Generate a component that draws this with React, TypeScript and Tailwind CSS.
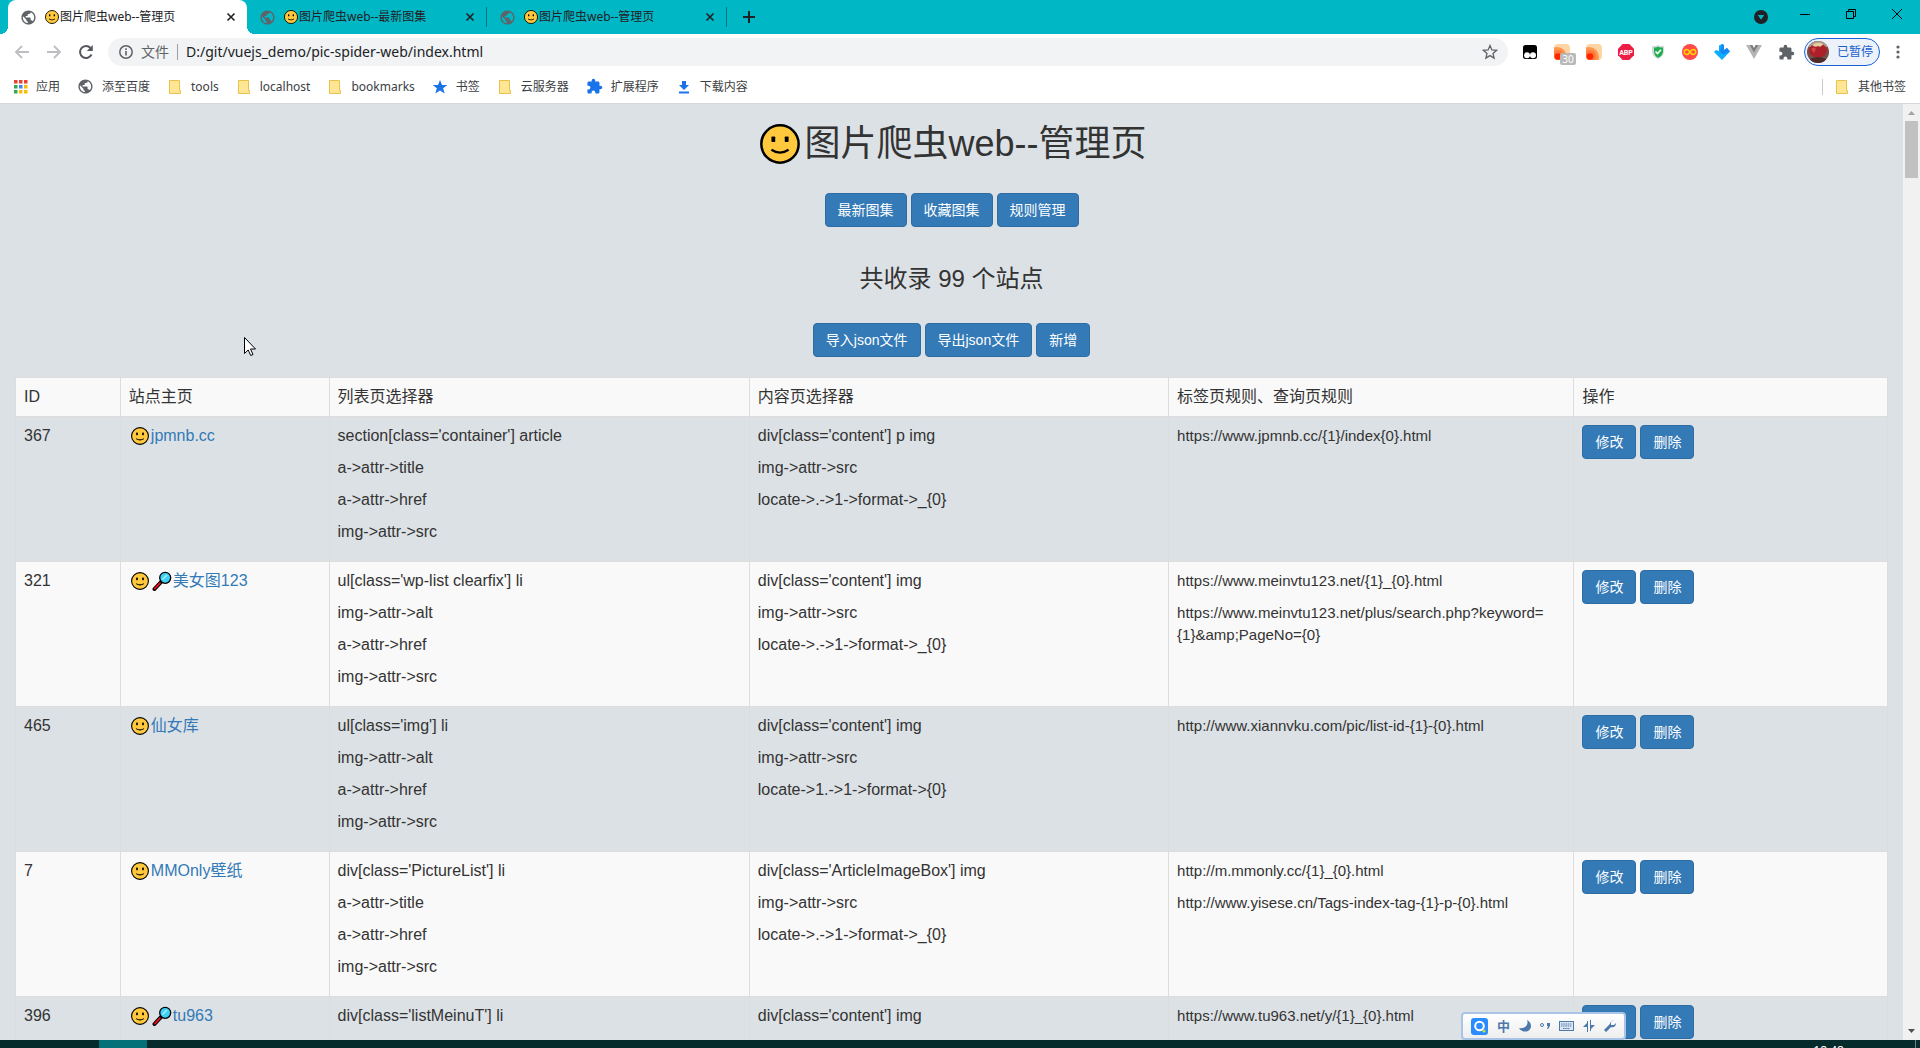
import React from "react";
import { MdPublic } from "react-icons/md";

const UI = "font-['Noto_Sans','Noto_Sans_CJK_SC',sans-serif]";

function Smile({ className }: { className: string }) {
  return (
    <svg viewBox="0 0 42 42" className={className} aria-hidden="true">
      <circle cx="21" cy="21" r="19.6" fill="#ffc83d" stroke="#000" strokeWidth="2.6" />
      <rect x="12" y="13" width="4" height="6" rx="1" fill="#000" />
      <rect x="26" y="13" width="4" height="6" rx="1" fill="#000" />
      <path d="M12 27q9 6 18 0" fill="none" stroke="#000" strokeWidth="2.4" />
    </svg>
  );
}

function Magnifier() {
  return (
    <svg viewBox="0 0 20 20" className="mx-px size-5 shrink-0" aria-hidden="true">
      <path d="M2.500 18 10 10" stroke="#000" strokeWidth="4" strokeLinecap="round" />
      <path d="M2.800 17.700 8 12.200" stroke="#e81224" strokeWidth="1.800" strokeLinecap="round" />
      <circle cx="13.200" cy="6.800" r="5.500" fill="#3fd0f5" stroke="#000" strokeWidth="1.300" />
      <path d="m10.500 8.500 4.500-4.500" stroke="#a5ecff" strokeWidth="1.600" />
    </svg>
  );
}

function Globe() {
  return <MdPublic className="size-[17px] shrink-0 text-[#5f6368]" aria-hidden="true" />;
}

function Folder() {
  return (
    <svg viewBox="0 0 16 16" className="size-4 shrink-0" aria-hidden="true">
      <path d="M2.500 1.500h10v10h1v3h-11z" fill="#ffe694" stroke="#e8c34a" />
    </svg>
  );
}

function Puzzle({ color }: { color: string }) {
  return (
    <svg viewBox="0 0 24 24" className="size-[17px] shrink-0" aria-hidden="true">
      <path fill={color} d="M20.500 11H19V7c0-1.100-.9-2-2-2h-4V3.500a2.500 2.500 0 0 0-5 0V5H4c-1.100 0-2 .9-2 2v3.800h1.500a2.700 2.700 0 0 1 0 5.400H2V20c0 1.100.9 2 2 2h3.800v-1.500a2.700 2.700 0 0 1 5.400 0V22H17c1.100 0 2-.9 2-2v-4h1.500a2.500 2.500 0 0 0 0-5z" />
    </svg>
  );
}

function Tab({ title, active }: { title: string; active?: boolean }) {
  return (
    <div className={"relative flex h-full w-[239px] shrink-0 items-center pr-2 pl-3 " + (active ? "rounded-t-lg bg-white" : "")}>
      {active && (
        <>
          <span className="absolute -left-2 bottom-0 size-2 bg-[radial-gradient(circle_at_0_0,transparent_8px,#fff_8px)]" />
          <span className="absolute -right-2 bottom-0 size-2 bg-[radial-gradient(circle_at_100%_0,transparent_8px,#fff_8px)]" />
        </>
      )}
      <Globe />
      <Smile className="ml-2 mr-px size-[14px] shrink-0" />
      <span className="grow whitespace-nowrap text-xs text-[#202124]">{title}</span>
      <button aria-label="关闭标签页" className="grid size-4 place-items-center">
        <svg viewBox="0 0 10 10" className="size-[10px]"><path d="m1.500 1.500 7 7m0-7-7 7" stroke="#202124" strokeWidth="1.600" /></svg>
      </button>
    </div>
  );
}

function TabStrip() {
  return (
    <header className="flex h-[34px] shrink-0 items-stretch bg-[#00b7c6] pl-2">
      <Tab title="图片爬虫web--管理页" active />
      <Tab title="图片爬虫web--最新图集" />
      <span className="my-[7px] w-px shrink-0 bg-[#05727c]" />
      <Tab title="图片爬虫web--管理页" />
      <span className="my-[7px] w-px shrink-0 bg-[#05727c]" />
      <button aria-label="新标签页" className="ml-2 grid w-7 place-items-center">
        <svg viewBox="0 0 14 14" className="size-[14px]"><path d="M7 1v12M1 7h12" stroke="#202124" strokeWidth="2" /></svg>
      </button>
      <div className="ml-auto flex h-7 items-center">
        <button aria-label="搜索标签页" className="mt-[6px] mr-[14px]">
          <svg viewBox="0 0 14 14" className="size-[14px]"><circle cx="7" cy="7" r="7" fill="#202124" /><path d="M3.800 5h6.400L7 9.800z" fill="#00b7c6" /></svg>
        </button>
        <button aria-label="最小化" className="grid w-[46px] place-items-center"><svg viewBox="0 0 10 10" className="size-[10px]"><path d="M0 5.500h10" stroke="#000" /></svg></button>
        <button aria-label="还原" className="grid w-[46px] place-items-center"><svg viewBox="0 0 10 10" className="size-[10px]"><path d="M.5 2.500h7v7h-7zM2.500 2.500v-2h7v7h-2" fill="none" stroke="#000" /></svg></button>
        <button aria-label="关闭" className="grid w-[46px] place-items-center"><svg viewBox="0 0 10 10" className="size-[10px]"><path d="m0 0 10 10M10 0 0 10" stroke="#000" /></svg></button>
      </div>
    </header>
  );
}

function Rss() {
  return (
    <svg viewBox="0 0 16 16" className="size-4" aria-hidden="true">
      <defs><clipPath id="rss"><rect width="16" height="16" rx="4" /></clipPath></defs>
      <g clipPath="url(#rss)">
        <rect width="16" height="16" fill="#ffd5a6" />
        <circle cx="3" cy="13" r="10" fill="#ff9650" />
        <circle cx="4" cy="12" r="6" fill="#ff7a3a" />
        <circle cx="4" cy="12.500" r="3.300" fill="#ff2600" />
      </g>
    </svg>
  );
}

function Extensions() {
  return (
    <div className="flex items-center gap-4">
      <svg viewBox="0 0 16 16" className="size-4"><rect x="1" y="1" width="14" height="14" rx="2.500" /><circle cx="5" cy="11.300" r="3" fill="#fff" /><circle cx="11" cy="11.300" r="3" fill="#fff" /></svg>
      <span className="relative">
        <Rss />
        <span className="absolute top-[9px] left-[6px] grid h-3 w-4 place-items-center rounded-[2px] bg-[#b9b9b9] text-[10px] leading-3 text-white">30</span>
      </span>
      <Rss />
      <svg viewBox="0 0 16 16" className="size-4"><path d="M4.700 0h6.600L16 4.700v6.600L11.300 16H4.700L0 11.300V4.700z" fill="#ed1e45" /><text x="8" y="10.700" fontSize="7" fontWeight="bold" fill="#fff" textAnchor="middle" fontFamily="Roboto">ABP</text></svg>
      <svg viewBox="0 0 16 16" className="size-4"><path d="M2 2c3 .3 4.500-.2 6-1 1.500.8 3 1.300 6 1v5c0 4-2.500 6.500-6 8-3.500-1.500-6-4-6-8z" fill="#d5d9dc" /><path d="M4 3.500c2 0 3-.4 4-1 1 .6 2 1 5 1V7c0 3.500-2 5.500-5 6.800C5.500 12.500 4 10.500 4 7z" fill="#1eae4f" /><path d="m5.500 7.500 2 2L11 5.800" stroke="#fff" strokeWidth="1.600" fill="none" /></svg>
      <svg viewBox="0 0 16 16" className="size-4"><circle cx="8" cy="8" r="8" fill="#ff4a4a" /><path d="M8 8C6.500 5.500 5.500 5.500 4.800 5.500a2.500 2.500 0 0 0 0 5C5.500 10.500 6.500 10.500 8 8s2.500-2.500 3.200-2.500a2.500 2.500 0 0 1 0 5C10.500 10.500 9.500 10.500 8 8z" fill="none" stroke="#ffd400" strokeWidth="1.500" /></svg>
      <svg viewBox="0 0 16 16" className="size-4"><path d="M5 1.500 8 0l2 1v5l3-2 3 3.500L8 16 0 8l2-2 3 1z" fill="#0aaeff" /><path d="M8 0l2 1v5l3-2 3 3.500-7 3L6 8z" fill="#1787f5" /></svg>
      <svg viewBox="0 0 16 16" className="size-4"><path d="M0 1h3.500L8 9l4.500-8H16L8 15z" fill="#b5b5b5" /><path d="M3.500 1h3L8 4l1.500-3h3L8 9z" fill="#7f7f7f" /></svg>
      <Puzzle color="#5f6368" />
    </div>
  );
}

function Toolbar() {
  return (
    <div className="flex h-9 shrink-0 items-center bg-white pr-[14px] pl-3">
      <div className="flex items-center gap-4 pl-[2px]">
        <button aria-label="后退"><svg viewBox="0 0 16 16" className="size-4"><path d="M15 8H2m6-6L2 8l6 6" fill="none" stroke="#bcbec1" strokeWidth="1.800" /></svg></button>
        <button aria-label="前进"><svg viewBox="0 0 16 16" className="size-4"><path d="M1 8h13M8 2l6 6-6 6" fill="none" stroke="#bcbec1" strokeWidth="1.800" /></svg></button>
        <button aria-label="重新加载"><svg viewBox="0 0 16 16" className="size-4"><path d="M13.500 10.500A6 6 0 1 1 12.500 4" fill="none" stroke="#54575c" strokeWidth="2" /><path d="M14.800 1v6h-6z" fill="#54575c" /></svg></button>
      </div>
      <div className="ml-[14px] flex h-7 grow items-center rounded-full bg-[#f1f3f4] pr-[10px] pl-[11px]">
        <svg viewBox="0 0 14 14" className="size-[14px]"><circle cx="7" cy="7" r="6.200" fill="none" stroke="#5f6368" strokeWidth="1.500" /><path d="M7 6v4.500M7 3.300v1.600" stroke="#5f6368" strokeWidth="1.600" /></svg>
        <span className="ml-2 text-sm text-[#5f6368]">文件</span>
        <span className="mx-2 h-4 w-px bg-[#9aa0a6]" />
        <input aria-label="地址" defaultValue="D:/git/vuejs_demo/pic-spider-web/index.html" className="grow bg-transparent text-sm text-[#202124] outline-none" />
        <button aria-label="添加书签"><svg viewBox="0 0 16 16" className="size-4"><path d="m8 1.500 1.900 4.400 4.700.4-3.600 3.100 1.100 4.700L8 11.600l-4.100 2.500L5 9.400 1.400 6.300l4.700-.4z" fill="none" stroke="#5f6368" strokeWidth="1.300" /></svg></button>
      </div>
      <div className="pl-[14px]"><Extensions /></div>
      <button className="ml-[9px] flex h-7 w-[76px] items-center rounded-full border border-[#1a61d8] bg-[#edf1fa] pl-[2px] text-xs text-[#1a5fd0]">
        <svg viewBox="0 0 22 22" className="mr-2 size-[22px]"><defs><clipPath id="avatar"><circle cx="11" cy="11" r="11" /></clipPath></defs><g clipPath="url(#avatar)"><rect width="22" height="22" fill="#72504b" /><path d="M0 0h22v6H0z" fill="#a99b8d" /><ellipse cx="11" cy="9.500" rx="9" ry="7" fill="#ad2029" /><path d="M5 4q6-4 11-1-2 4-5 2-3 2-6-1z" fill="#e6cda0" /><path d="M4 8q3-3 5 0l-2 4z" fill="#cc4545" /><path d="M3 18q8-4 16 0v4H3z" fill="#4e2a2a" /></g></svg>
        已暂停
      </button>
      <button aria-label="菜单" className="ml-[10px] grid w-4 place-items-center"><svg viewBox="0 0 4 14" className="h-[14px] w-1"><circle cx="2" cy="2" r="1.600" fill="#5f6368" /><circle cx="2" cy="7" r="1.600" fill="#5f6368" /><circle cx="2" cy="12" r="1.600" fill="#5f6368" /></svg></button>
    </div>
  );
}

const appColors = ["#ea4335", "#ea4335", "#ea4335", "#34a853", "#4285f4", "#fbbc04", "#34a853", "#fbbc04", "#fbbc04"];

function Bookmarks() {
  const item = "flex items-center gap-2 whitespace-nowrap";
  return (
    <nav className="flex h-[34px] shrink-0 items-center border-b border-[#d5d8dc] bg-white pr-[14px] pl-[14px] text-xs text-[#3c4043]">
      <div className="flex items-center gap-[17px]">
        <a href="#apps" className={item}>
          <svg viewBox="0 0 14 14" className="size-[14px]">
            {appColors.map((c, i) => <rect key={i} x={(i % 3) * 5} y={Math.floor(i / 3) * 5} width="3.500" height="3.500" fill={c} />)}
          </svg>应用</a>
        <a href="#baidu" className={item}><Globe />添至百度</a>
        <a href="#tools" className={item}><Folder />tools</a>
        <a href="#localhost" className={item}><Folder />localhost</a>
        <a href="#bookmarks" className={item}><Folder />bookmarks</a>
        <a href="#star" className={item}><svg viewBox="0 0 16 16" className="size-4"><path d="m8 1 2 5h5.300l-4.200 3.300 1.600 5.300L8 11.400l-4.700 3.200 1.600-5.300L.7 6H6z" fill="#1a73e8" /></svg>书签</a>
        <a href="#cloud" className={item}><Folder />云服务器</a>
        <a href="#extensions" className={item}><Puzzle color="#1a73e8" />扩展程序</a>
        <a href="#downloads" className={item}><svg viewBox="0 0 16 16" className="size-4"><path d="M6 2h4v4h3l-5 5-5-5h3zM3 12.500h10v2H3z" fill="#1a73e8" /></svg>下载内容</a>
      </div>
      <div className="ml-auto flex items-center">
        <span className="mr-[11px] h-4 w-px bg-[#c6c9cd]" />
        <a href="#other" className={item}><Folder />其他书签</a>
      </div>
    </nav>
  );
}

function Btn({ children }: { children: React.ReactNode }) {
  return <button className="h-[34px] rounded border border-[#2e6da4] bg-[#337ab7] px-3 text-sm leading-5 whitespace-nowrap text-white">{children}</button>;
}

type Site = { id: number; name: string; search?: boolean; list: string[]; content: string[]; rules: string[] };

const sites: Site[] = [
  { id: 367, name: "jpmnb.cc", list: ["section[class='container'] article", "a->attr->title", "a->attr->href", "img->attr->src"], content: ["div[class='content'] p img", "img->attr->src", "locate->.->1->format->_{0}"], rules: ["https://www.jpmnb.cc/{1}/index{0}.html"] },
  { id: 321, name: "美女图123", search: true, list: ["ul[class='wp-list clearfix'] li", "img->attr->alt", "a->attr->href", "img->attr->src"], content: ["div[class='content'] img", "img->attr->src", "locate->.->1->format->_{0}"], rules: ["https://www.meinvtu123.net/{1}_{0}.html", "https://www.meinvtu123.net/plus/search.php?keyword={1}&amp;PageNo={0}"] },
  { id: 465, name: "仙女库", list: ["ul[class='img'] li", "img->attr->alt", "a->attr->href", "img->attr->src"], content: ["div[class='content'] img", "img->attr->src", "locate->1.->1->format->{0}"], rules: ["http://www.xiannvku.com/pic/list-id-{1}-{0}.html"] },
  { id: 7, name: "MMOnly壁纸", list: ["div[class='PictureList'] li", "a->attr->title", "a->attr->href", "img->attr->src"], content: ["div[class='ArticleImageBox'] img", "img->attr->src", "locate->.->1->format->_{0}"], rules: ["http://m.mmonly.cc/{1}_{0}.html", "http://www.yisese.cn/Tags-index-tag-{1}-p-{0}.html"] },
  { id: 396, name: "tu963", search: true, list: ["div[class='listMeinuT'] li"], content: ["div[class='content'] img"], rules: ["https://www.tu963.net/y/{1}_{0}.html"] },
];

const headings = ["ID", "站点主页", "列表页选择器", "内容页选择器", "标签页规则、查询页规则", "操作"];

function Lines({ lines }: { lines: string[] }) {
  return <>{lines.map((l) => <p key={l} className="mb-[10px] break-words">{l}</p>)}</>;
}

function SiteTable() {
  const cell = "border border-[#dddddd] p-2 text-left align-top font-normal";
  return (
    <table className="w-full table-fixed border-collapse text-base leading-[22px]">
      <colgroup>
        <col className="w-[5.6%]" /><col className="w-[11.150%]" /><col className="w-[22.450%]" /><col className="w-[22.400%]" /><col className="w-[21.650%]" /><col />
      </colgroup>
      <thead>
        <tr className="bg-[#f9f9f9]">{headings.map((h) => <th key={h} scope="col" className={cell}>{h}</th>)}</tr>
      </thead>
      <tbody>
        {sites.map((s) => (
          <tr key={s.id} className="even:bg-[#f9f9f9]">
            <td className={cell}>{s.id}</td>
            <td className={cell}>
              <span className="flex h-[22px] items-center pl-[2px]">
                <Smile className="mr-[2px] size-[18px] shrink-0" />
                {s.search && <Magnifier />}
                <a href="#site" className="text-[#337ab7]">{s.name}</a>
              </span>
            </td>
            <td className={cell}><Lines lines={s.list} /></td>
            <td className={cell}><Lines lines={s.content} /></td>
            <td className={cell + " text-[15px]"}><Lines lines={s.rules} /></td>
            <td className={cell}><span className="flex gap-1"><Btn>修改</Btn><Btn>删除</Btn></span></td>
          </tr>
        ))}
      </tbody>
    </table>
  );
}

function Scrollbar() {
  return (
    <div className="flex w-[17px] shrink-0 flex-col items-center bg-[#f1f1f1]" aria-hidden="true">
      <svg viewBox="0 0 17 17" className="size-[17px]"><path d="M5 11h7L8.500 7z" fill="#a3a3a3" /></svg>
      <span className="h-[57px] w-[13px] bg-[#c1c1c1]" />
      <svg viewBox="0 0 17 17" className="mt-auto size-[17px]"><path d="M5 6h7L8.500 10z" fill="#505050" /></svg>
    </div>
  );
}

function ImeBar() {
  return (
    <div className="absolute right-[294px] bottom-0 flex h-7 w-[165px] items-center justify-between rounded border-2 border-[#a9c4e6] bg-linear-to-b from-white to-[#eeeeee] px-2 text-[#4c78ab]">
      <svg viewBox="0 0 17 17" className="size-[17px]"><rect width="17" height="17" rx="3" fill="#2b8cff" /><circle cx="8.500" cy="8" r="4.300" fill="none" stroke="#fff" strokeWidth="2" /><circle cx="13" cy="13" r="1.600" fill="#b9e53a" /></svg>
      <span className="text-[13px] leading-4 font-bold">中</span>
      <svg viewBox="0 0 12 12" className="size-3"><path d="M8 0c2 5-2 9-8 8 4 6 12 4 12-2 0-3-2-5-4-6z" fill="currentColor" /></svg>
      <svg viewBox="0 0 10 8" className="h-2 w-[10px]"><circle cx="2" cy="3" r="1.500" fill="none" stroke="currentColor" /><path d="M7 1h3v3L8 7H7l1-3H7z" fill="currentColor" /></svg>
      <svg viewBox="0 0 15 10" className="h-[10px] w-[15px]"><rect x=".5" y=".5" width="14" height="9" fill="#dce7f3" stroke="currentColor" /><path d="M2 3h11M2 5h11M4 7.500h7" stroke="currentColor" strokeDasharray="1.500 .7" /></svg>
      <svg viewBox="0 0 12 12" className="size-3"><path d="M5 1v11h-1V7H0l4-4V1zM7 11V0h1v5h4L8 9v2z" fill="currentColor" /></svg>
      <svg viewBox="0 0 12 12" className="size-3"><path d="m1 11 6-6" stroke="currentColor" strokeWidth="3" /><path d="M10 0 7 2v3h3l2-2c0 4-3 5-5 4S5 2 10 0z" fill="currentColor" /></svg>
    </div>
  );
}

export default function App() {
  return (
    <div className={"flex h-screen flex-col overflow-hidden " + UI}>
      <TabStrip />
      <Toolbar />
      <Bookmarks />
      <div className="relative flex min-h-0 grow bg-[#dce1e5]">
        <main className="min-w-0 grow overflow-hidden px-[15px] font-['Liberation_Sans','Noto_Sans_CJK_SC',sans-serif] text-[#333333]">
          <h1 className="mt-5 flex h-10 items-center justify-center gap-1 pl-1 text-4xl"><Smile className="size-10" />图片爬虫web--管理页</h1>
          <div className="mt-[29px] flex justify-center gap-1"><Btn>最新图集</Btn><Btn>收藏图集</Btn><Btn>规则管理</Btn></div>
          <h3 className="mt-9 text-center text-2xl leading-8">共收录 99 个站点</h3>
          <div className="mt-7 mb-5 flex justify-center gap-1"><Btn>导入json文件</Btn><Btn>导出json文件</Btn><Btn>新增</Btn></div>
          <SiteTable />
        </main>
        <Scrollbar />
        <ImeBar />
        <svg viewBox="0 0 12 19" className="absolute top-[233px] left-[244px] h-[19px] w-3" aria-hidden="true"><path d="M.5.5v16l3.700-3.500 2.500 5.500 2.300-1-2.500-5.500h5z" fill="#fff" stroke="#000" /></svg>
      </div>
      <footer className="flex h-2 shrink-0 overflow-hidden bg-[#062b2d] text-xs text-white">
        <span className="ml-[99px] w-12 bg-[#047078]" />
        <time className="mt-[3px] mr-[71px] ml-auto leading-4">18:48</time>
        <span className="mr-1 w-px bg-[#6f8384]" />
      </footer>
    </div>
  );
}
